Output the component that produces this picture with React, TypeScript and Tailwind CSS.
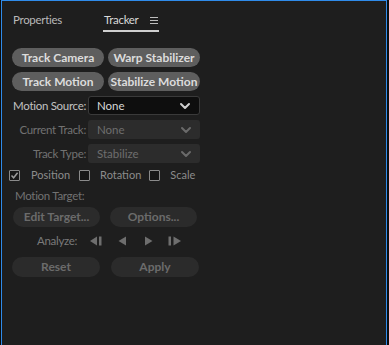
import { ChevronDown } from "lucide-react";

const font = { fontFamily: 'Lato, "Noto Sans", sans-serif' };

function PillButton({ label, disabled }: { label: string; disabled?: boolean }) {
  return (
    <button
      className={
        "whitespace-nowrap rounded-full text-[12px] font-bold leading-none " +
        (disabled ? "h-[20px] bg-[#2b2b2b] text-[#6b6b6b]" : "h-[19px] bg-[#5e5e5e] text-[#dcdcdc]")
      }
    >
      {label}
    </button>
  );
}

function Dropdown({ value, disabled }: { value: string; disabled?: boolean }) {
  return (
    <div
      className={
        "flex h-[19px] w-[112px] items-center justify-between rounded-[3px] pr-[6px] text-[11.5px] " +
        (disabled
          ? "bg-[#2c2c2c] pl-[9px] text-[#6e6e6e]"
          : "border border-[#3a3a3a] bg-[#0e0e0e] pl-[8px] pr-[5px] text-[#d8d8d8]")
      }
    >
      <span>{value}</span>
      <ChevronDown size={16} strokeWidth={3} className={disabled ? "text-[#6a6a6a]" : "text-[#d0d0d0]"} />
    </div>
  );
}

function Row({ label, children, dim }: { label: string; children: React.ReactNode; dim?: boolean }) {
  return (
    <div className="flex items-center gap-[2px]">
      <span
        className={
          "w-[74px] whitespace-nowrap text-right text-[11.5px] tracking-[-0.3px] " +
          (dim ? "text-[#727272]" : "text-[#c2c2c2]")
        }
      >
        {label}
      </span>
      {children}
    </div>
  );
}

function Box({ checked }: { checked?: boolean }) {
  return (
    <span className="flex h-[11px] w-[11px] items-center justify-center rounded-[1px] border border-[#8a8a8a] bg-[#161616]">
      {checked && (
        <svg width="9" height="9" viewBox="0 0 9 9">
          <path d="M1.5 4.5 L3.6 6.8 L7.6 1.8" fill="none" stroke="#9a9a9a" strokeWidth="1.5" />
        </svg>
      )}
    </span>
  );
}

export default function App() {
  return (
    <div className="flex h-[345px] w-[389px] bg-[#0c0c0c] pl-[1px] pr-[2px]" style={font}>
      <div className="flex-1 border-x border-t border-[#2f8bea] bg-[#1e1e1e]">
        <div className="flex h-[31px] pl-[11px] text-[11.5px] leading-[18px] tracking-[-0.3px]">
          <span className="w-[90px] pt-[10px] text-[#b9b9b9]">Properties</span>
          <div className="flex h-full w-[56px] border-b-2 border-[#cfcfcf] pl-[1px] pt-[10px]">
            <span className="text-[#d9d9d9]">Tracker</span>
            <svg width="8" height="8" viewBox="0 0 8 8" className="ml-auto mr-[1px] mt-[5px]">
              <path d="M0 1.5H8M0 4.5H8M0 7.5H8" stroke="#bdbdbd" strokeWidth="1" />
            </svg>
          </div>
        </div>

        <div className="flex w-[198px] flex-col pl-[10px] pt-[16px]">
          <div className="grid grid-cols-2 gap-x-[4px] gap-y-[5px]">
            <PillButton label="Track Camera" />
            <PillButton label="Warp Stabilizer" />
            <PillButton label="Track Motion" />
            <PillButton label="Stabilize Motion" />
          </div>

          <div className="mt-[5px] flex flex-col gap-[5px]">
            <Row label="Motion Source:">
              <Dropdown value="None" />
            </Row>
            <Row label="Current Track:" dim>
              <Dropdown value="None" disabled />
            </Row>
            <Row label="Track Type:" dim>
              <Dropdown value="Stabilize" disabled />
            </Row>
          </div>

          <div className="mt-[4px] flex h-[16px] items-center whitespace-nowrap text-[11px] text-[#8c8c8c]">
            <span className="-ml-[3px]"><Box checked /></span>
            <span className="ml-[11px]">Position</span>
            <span className="ml-[9px]"><Box /></span>
            <span className="ml-[10px]">Rotation</span>
            <span className="ml-[8px]"><Box /></span>
            <span className="ml-[10px]">Scale</span>
          </div>

          <div className="mt-[5px] flex h-[16px] items-center pl-[3px] text-[11.5px] tracking-[-0.3px] text-[#727272]">
            Motion Target:
          </div>

          <div className="mt-[3px] grid grid-cols-2 gap-x-[10px] pl-[1px] pr-[3px]">
            <PillButton label="Edit Target..." disabled />
            <PillButton label="Options..." disabled />
          </div>

          <div className="mt-[6px] flex h-[16px] items-center pl-[25px] text-[11.5px] tracking-[-0.3px] text-[#7a7a7a]">
            <span>Analyze:</span>
            <svg width="12" height="10" viewBox="0 0 12 10" className="ml-[13px]">
              <path d="M0 5 L7 0.5 V9.5 Z" fill="#6e6e6e" />
              <rect x="9" y="0.5" width="2.5" height="9" fill="#6e6e6e" />
            </svg>
            <svg width="9" height="10" viewBox="0 0 9 10" className="ml-[16px]">
              <path d="M0.5 5 L8 0.5 V9.5 Z" fill="#6e6e6e" />
            </svg>
            <svg width="9" height="10" viewBox="0 0 9 10" className="ml-[17px]">
              <path d="M8.5 5 L1 0.5 V9.5 Z" fill="#6e6e6e" />
            </svg>
            <svg width="13" height="10" viewBox="0 0 13 10" className="ml-[15px]">
              <rect x="0.5" y="0.5" width="2.5" height="9" fill="#6e6e6e" />
              <path d="M13 5 L5.5 0.5 V9.5 Z" fill="#6e6e6e" />
            </svg>
          </div>

          <div className="mt-[8px] grid grid-cols-2 gap-x-[11px] pr-[1px]">
            <PillButton label="Reset" disabled />
            <PillButton label="Apply" disabled />
          </div>
        </div>
      </div>
    </div>
  );
}
